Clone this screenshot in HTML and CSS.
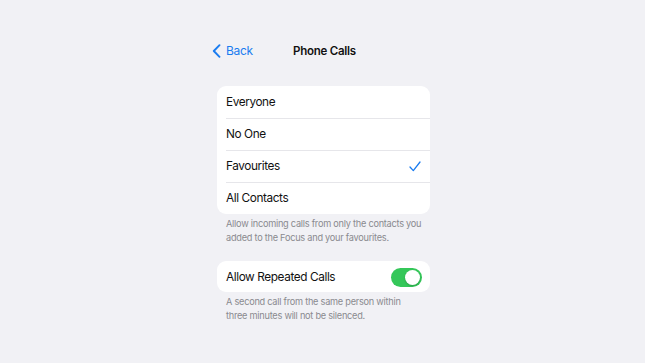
FILE: index.html
```html
<!DOCTYPE html>
<html>
<head>
<meta charset="utf-8">
<link rel="stylesheet" href="styles.css">
</head>
<body>
<div class="screen">
  <div class="nav">
    <a class="back">
      <svg class="chev" width="9" height="14" viewBox="0 0 9 14"><path d="M7.5 1.2 L1.8 7 L7.5 12.8" fill="none" stroke="#1a7cf0" stroke-width="1.9" stroke-linecap="round" stroke-linejoin="round"/></svg>
      <span>Back</span>
    </a>
    <div class="title">Phone Calls</div>
  </div>

  <div class="group">
    <div class="row"><span>Everyone</span></div>
    <div class="row"><span>No One</span></div>
    <div class="row"><span>Favourites</span>
      <svg class="check" width="12" height="11" viewBox="0 0 12 11"><path d="M1 6 L4.3 9.6 L11 1" fill="none" stroke="#1a7cf0" stroke-width="1.3" stroke-linecap="round" stroke-linejoin="round"/></svg>
    </div>
    <div class="row"><span>All Contacts</span></div>
  </div>
  <p class="footer">Allow incoming calls from only the contacts you<br>added to the Focus and your favourites.</p>

  <div class="group single">
    <div class="row"><span>Allow Repeated Calls</span><div class="toggle"><div class="knob"></div></div></div>
  </div>
  <p class="footer">A second call from the same person within<br>three minutes will not be silenced.</p>
</div>
</body>
</html>
```
FILE: styles.css
```css
* { box-sizing: border-box; }
html, body { margin: 0; padding: 0; }
body {
  background: #f1f1f5;
  font-family: Inter, "Noto Sans", sans-serif;
  width: 645px;
  height: 363px;
  overflow: hidden;
}
.screen {
  width: 213px;
  margin-left: 217px;
  padding-top: 40px;
}
.nav {
  position: relative;
  height: 20px;
  display: flex;
  align-items: center;
  justify-content: center;
  margin-bottom: 26px;
}
.back {
  position: absolute;
  left: -5px;
  top: 3px;
  display: flex;
  align-items: center;
  gap: 5px;
  color: #1a7cf0;
  font-size: 12px;
  letter-spacing: -0.3px;
}
.chev { display: block; }
.title {
  font-size: 11.5px;
  font-weight: 600;
  color: #111;
  letter-spacing: -0.25px;
  margin-top: 1px;
  margin-left: 2px;
}
.group {
  background: #fff;
  border-radius: 9px;
  overflow: hidden;
}
.row {
  height: 32px;
  display: flex;
  align-items: center;
  justify-content: space-between;
  padding: 0 9px 0 9px;
  font-size: 11.8px;
  color: #111;
  letter-spacing: -0.4px;
  position: relative;
}
.row + .row::before {
  content: "";
  position: absolute;
  left: 9px;
  right: 0;
  top: 0;
  height: 1px;
  background: #e6e6ea;
}
.check { margin-right: 0; margin-top: 0; }
.footer {
  margin: 3px 0 0 9px;
  font-size: 9.2px;
  line-height: 14px;
  color: #8a8a8f;
  letter-spacing: -0.25px;
  white-space: nowrap;
}
.footer + .group { margin-top: 16px; }
.single .row { height: 31px; }
.toggle {
  width: 31px;
  height: 19px;
  background: #34c759;
  border-radius: 10px;
  position: relative;
  margin-right: -1px;
  margin-top: 1px;
}
.knob {
  position: absolute;
  right: 2px;
  top: 2px;
  width: 15px;
  height: 15px;
  border-radius: 50%;
  background: #fff;
  box-shadow: 0 1px 2px rgba(0,0,0,0.2);
}
```
